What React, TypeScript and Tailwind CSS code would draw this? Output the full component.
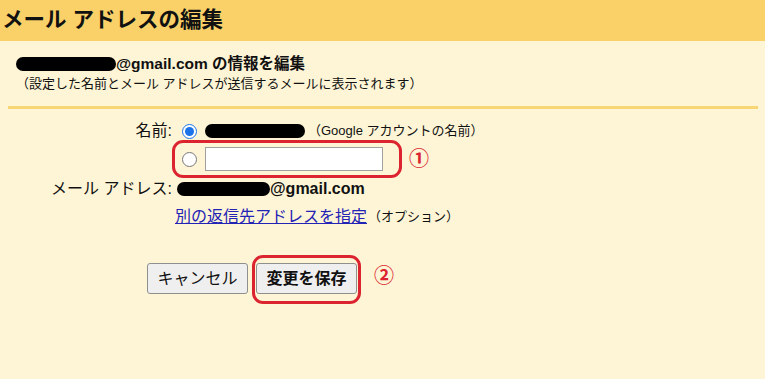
import React from 'react'

function Blackout({ className }: { className: string }) {
  return <span className={`inline-block rounded-full bg-black ${className}`} />
}

export default function App() {
  return (
    <div className="h-[379px] w-[765px] overflow-hidden bg-[#fef5d6] font-['Liberation_Sans','Noto_Sans_CJK_JP',sans-serif] text-[#111]">
      <div className="flex h-[41px] items-center bg-[#f9d168] pl-[2px]">
        <h1 className="text-[21.5px] font-bold leading-none text-[#111]">メール アドレスの編集</h1>
      </div>

      <div className="pl-[16px] pt-[13px]">
        <div className="flex h-[20px] items-center">
          <Blackout className="h-[14px] w-[100px]" />
          <span className="text-[15.5px] font-bold leading-none">@gmail.com の情報を編集</span>
        </div>
        <p className="h-[19px] text-[13px] leading-[19px]">（設定した名前とメール アドレスが送信するメールに表示されます）</p>
      </div>

      <div className="ml-[8px] mr-[7px] mt-[13px] h-[3px] bg-[#f7d676]" />

      <div className="mt-[10px] grid grid-cols-[172px_1fr] text-[16px]">
        {/* name */}
        <div className="flex h-[24px] items-center justify-end">名前:</div>
        <div className="flex h-[24px] items-center pl-[10px]">
          <input type="radio" name="name" defaultChecked className="h-[15px] w-[15px] accent-[#1a73e8]" />
          <Blackout className="ml-[8px] h-[14px] w-[100px]" />
          <span className="ml-[3px] text-[13px]">（Google アカウントの名前）</span>
        </div>

        <div className="h-[32px]" />
        <div className="flex h-[32px] items-center pl-[10px]">
          <div className="relative flex items-center">
            <input type="radio" name="name" className="h-[15px] w-[15px]" />
            <input
              type="text"
              className="ml-[8px] h-[24px] w-[178px] border border-[#a0a0a0] bg-white px-1 text-[14px] outline-none"
            />
            <span className="pointer-events-none absolute -left-[10px] -top-[7px] h-[38px] w-[230px] rounded-[11px] border-[3px] border-[#dc2430]" />
          </div>
          <span className="ml-[26px] text-[20px] font-bold leading-none text-[#dc2430]">①</span>
        </div>

        {/* email */}
        <div className="flex h-[28px] items-center justify-end">メール アドレス:</div>
        <div className="flex h-[28px] items-center pl-[5px]">
          <Blackout className="h-[14px] w-[93px]" />
          <span className="font-bold">@gmail.com</span>
        </div>

        <div className="h-[28px]" />
        <div className="flex h-[28px] items-center pl-[3px]">
          <a href="#" className="text-[#2323b5] underline">別の返信先アドレスを指定</a>
          <span className="ml-[1px] text-[13px]">（オプション）</span>
        </div>
      </div>

      <div className="ml-[147px] mt-[32px] flex items-center">
        <button className="h-[31px] w-[101px] rounded-[3px] border border-[#8f8f8f] bg-[#efefef] text-[16px]">
          キャンセル
        </button>
        <div className="relative ml-[8px]">
          <button className="h-[31px] w-[101px] rounded-[3px] border border-[#8f8f8f] bg-[#efefef] text-[16px] font-bold">
            変更を保存
          </button>
          <span className="pointer-events-none absolute -left-[4px] -top-[8px] h-[49px] w-[109px] rounded-[11px] border-[3px] border-[#dc2430]" />
        </div>
        <span className="ml-[17px] -mt-[6px] text-[20px] font-bold leading-none text-[#dc2430]">②</span>
      </div>
    </div>
  )
}
